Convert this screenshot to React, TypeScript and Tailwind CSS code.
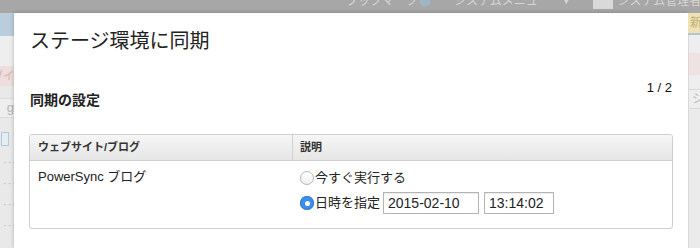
const jp = {
  fontFamily: '"Liberation Sans", "Noto Sans CJK JP", sans-serif',
};

function Radio({ checked }: { checked?: boolean }) {
  return checked ? (
    <span className="flex h-[14px] w-[14px] shrink-0 items-center justify-center rounded-full bg-[#3d8ee8] shadow-[inset_0_0_0_1px_#2f7fd6]">
      <span className="h-[5px] w-[5px] rounded-full bg-white" />
    </span>
  ) : (
    <span className="h-[14px] w-[14px] shrink-0 rounded-full border border-[#b9b9b9] bg-gradient-to-b from-white to-[#f0f0f0]" />
  );
}

function LeftStrip() {
  return (
    <div className="flex w-[14px] shrink-0 flex-col overflow-hidden bg-[#e9e9e9] text-[11px] text-[#b5b5b5]">
      <div className="h-[23px] bg-[#b9cddd]" />
      <div className="h-[30px] bg-[#eeeeee]" />
      <div className="flex h-[20px] items-center justify-end whitespace-nowrap bg-[#efdcdc] text-[#d0b5b5]">ブイ</div>
      <div className="h-[12px]" />
      <div className="flex h-[20px] items-center justify-end border-y border-[#dcdcdc] bg-[#eeeeee] text-[13px]">g</div>
      <div className="h-[14px]" />
      <div className="ml-[1px] h-[14px] w-[8px] border border-[#b5c8d8] bg-[#e4edf4]" />
      <div className="flex flex-col gap-[13px] pl-[3px] pt-[12px] leading-[8px] tracking-[1px]">
        <span>···</span>
        <span>···</span>
        <span>···</span>
        <span>···</span>
      </div>
    </div>
  );
}

function RightStrip() {
  return (
    <div className="flex w-[12px] shrink-0 flex-col overflow-hidden bg-[#e9e9e9] text-[12px]">
      <div className="flex h-[22px] items-center whitespace-nowrap border-b-2 border-[#b2c6d6] bg-[#eee2b6] pl-[2px] text-[#c2b07a]">新</div>
      <div className="h-[18px] border-l border-[#d8d8d8] bg-[#eeeeee]" />
      <div className="h-[22px] border-l border-[#d8d8d8] bg-[#efe2e2]" />
      <div className="h-[14px] border-l border-[#d8d8d8] bg-[#eeeeee]" />
      <div className="flex h-[20px] items-center whitespace-nowrap border-y border-l border-[#d8d8d8] bg-[#eeeeee] pl-[3px] text-[#b5b5b5]">シ</div>
      <div className="flex-1 border-l border-[#d8d8d8] bg-[#ebebeb]" />
    </div>
  );
}

export default function App() {
  return (
    <div className="flex h-[248px] w-[700px] flex-col overflow-hidden bg-[#a9a9a9]" style={jp}>
      <div className="h-[13px] shrink-0 overflow-hidden bg-[#a7a7a7]">
        <div className="-mt-[7px] flex items-center whitespace-nowrap text-[12px] leading-[16px] text-[#d6d6d6]">
          <span className="ml-[346px] shrink-0">ブックマーク</span>
          <span className="ml-[2px] h-[10px] w-[10px] shrink-0 rounded-sm bg-[#9fb6c6]" />
          <span className="ml-[24px] shrink-0">システムメニュー</span>
          <span className="ml-[12px] shrink-0 text-[9px]">▼</span>
          <span className="ml-[22px] h-[16px] w-[20px] shrink-0 bg-[#d9d9d9]" />
          <span className="ml-[5px] shrink-0">システム管理者</span>
        </div>
      </div>
      <div className="flex flex-1">
        <LeftStrip />
        <div className="flex flex-1 flex-col bg-white shadow-[0_0_4px_rgba(0,0,0,0.25)]">
          <div className="pl-[16px] pt-[14px] text-[20px] leading-[28px] text-[#222]">ステージ環境に同期</div>
          <div className="flex items-start justify-between pl-[16px] pr-[16px] pt-[25px]">
            <div className="pt-[10px] text-[14px] font-bold leading-[20px] text-[#222]">同期の設定</div>
            <div className="text-[13px] leading-[16px] text-[#111]">1 / 2</div>
          </div>
          <div className="mx-[15px] mt-[24px] overflow-hidden rounded-[3px] border border-[#cfcfcf]">
            <div className="flex h-[26px] items-center border-b border-[#cfcfcf] bg-gradient-to-b from-[#f6f6f6] to-[#e6e6e6] text-[11px] font-bold text-[#333]">
              <div className="flex h-full w-[263px] items-center border-r border-[#d2d2d2] pl-[8px]">ウェブサイト/ブログ</div>
              <div className="pl-[7px]">説明</div>
            </div>
            <div className="flex h-[67px] text-[13px] text-[#222]">
              <div className="w-[263px] pl-[8px] pt-[8px] leading-[16px]">PowerSync ブログ</div>
              <div className="flex flex-col gap-[6px] pl-[7px] pt-[9px]">
                <div className="flex items-center gap-px leading-[16px]">
                  <Radio />
                  <span>今すぐ実行する</span>
                </div>
                <div className="flex items-center gap-px">
                  <Radio checked />
                  <span>日時を指定</span>
                  <span className="ml-[2px] flex h-[22px] w-[96px] items-center border border-[#b4b4b4] pl-[4px] text-[14px] shadow-[inset_0_1px_1px_rgba(0,0,0,0.08)]">2015-02-10</span>
                  <span className="ml-[4px] flex h-[22px] w-[70px] items-center border border-[#b4b4b4] pl-[4px] text-[14px] shadow-[inset_0_1px_1px_rgba(0,0,0,0.08)]">13:14:02</span>
                </div>
              </div>
            </div>
          </div>
        </div>
        <RightStrip />
      </div>
    </div>
  );
}
